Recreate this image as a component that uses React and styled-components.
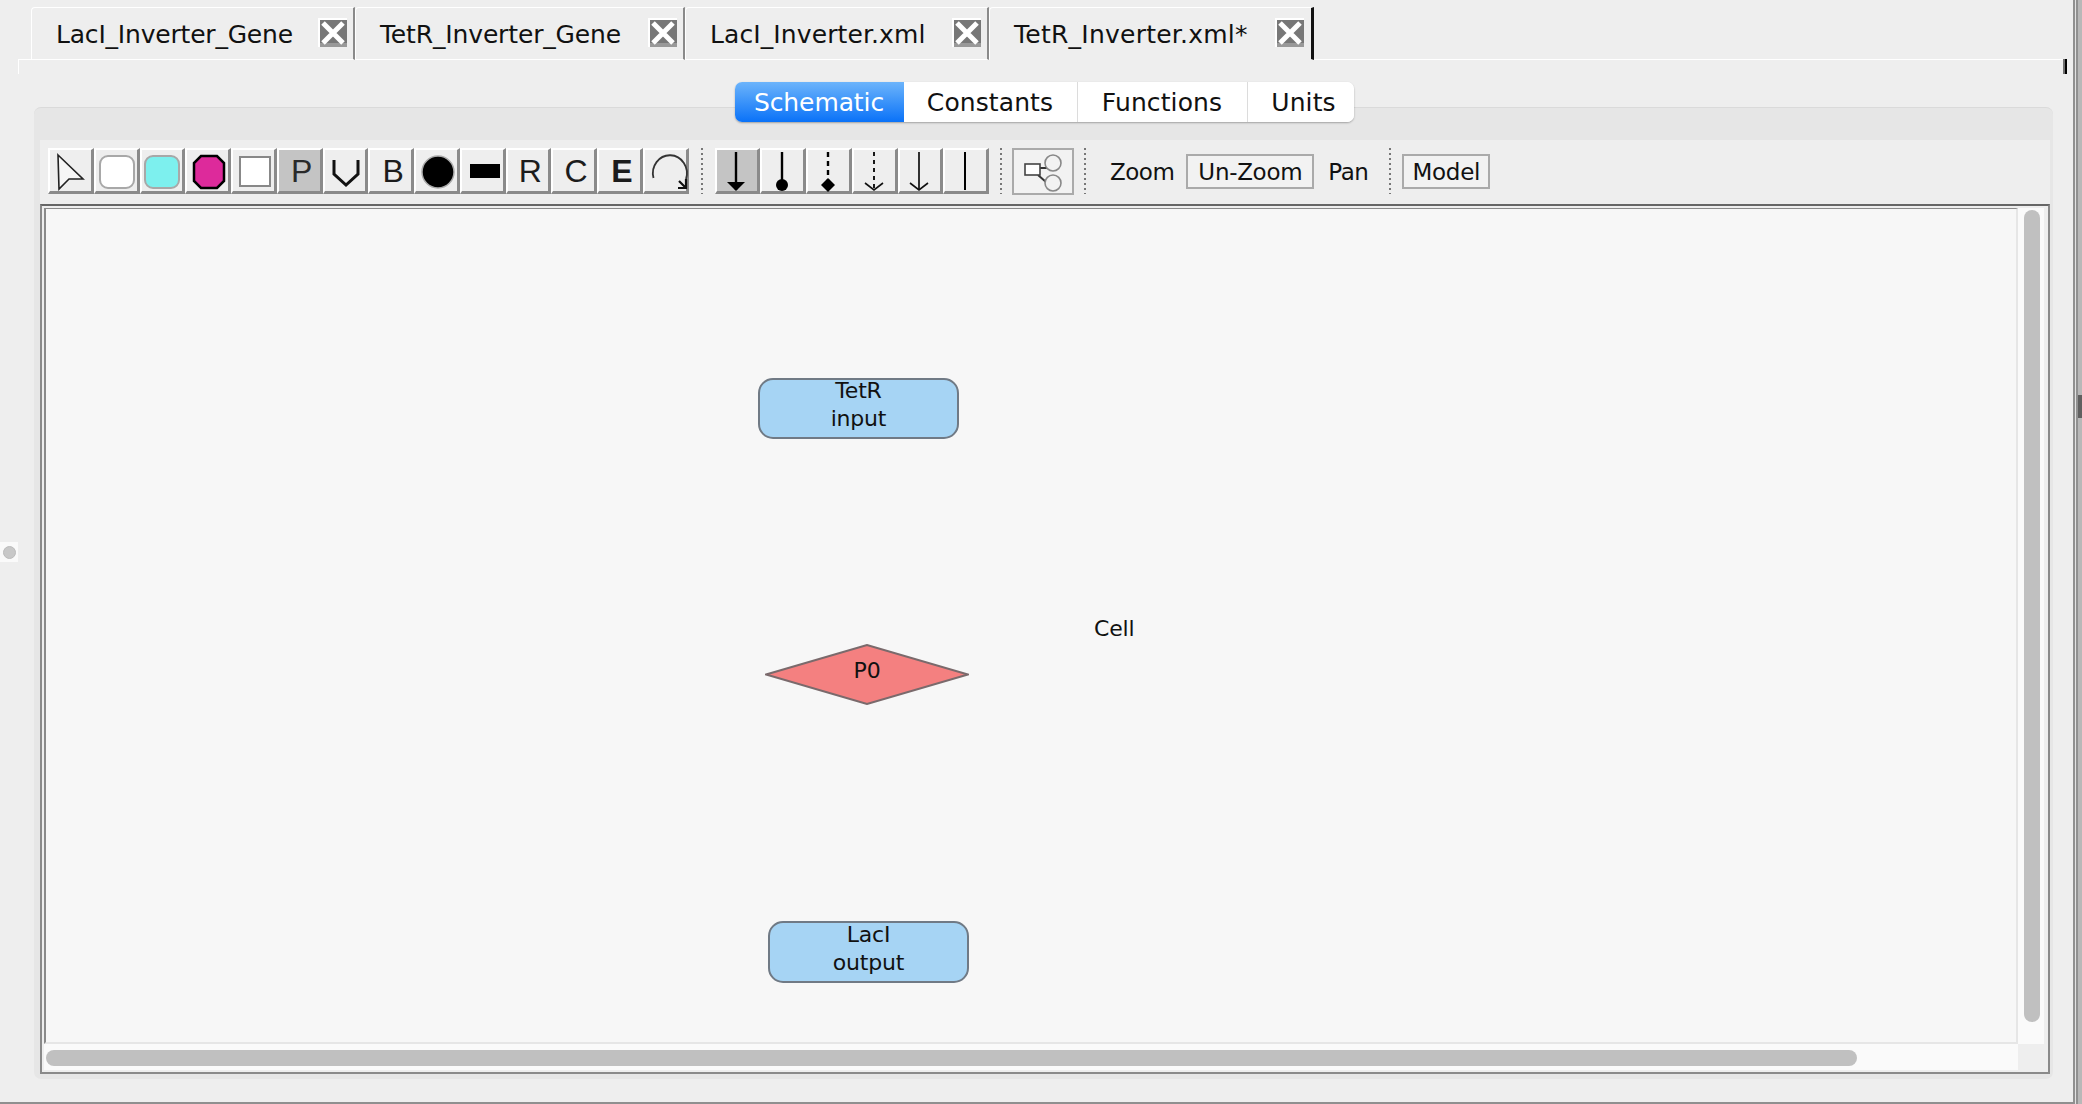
import React from "react";
import styled, { createGlobalStyle } from "styled-components";

const Global = createGlobalStyle`
  html, body { margin: 0; padding: 0; background: #eeeeee; }
  body { font-family: "DejaVu Sans", "Open Sans", sans-serif; color: #111; overflow: hidden; }
`;

const Window = styled.div`
  display: flex;
  width: 2082px;
  height: 1104px;
  overflow: hidden;
  background: #eeeeee;
`;
const Main = styled.div`
  display: flex;
  flex-direction: column;
  width: 2073px;
  height: 1104px;
  box-sizing: border-box;
  border-bottom: 2px solid #8f8f8f;
`;
const EdgeLine = styled.div`
  width: 2px;
  height: 1104px;
  background: #909090;
`;
const EdgeGap = styled.div`
  width: 1px;
  background: #e2e2e2;
`;
const EdgeStripe = styled.div`
  width: 2px;
  background: #909090;
`;
const EdgeRail = styled.div`
  position: relative;
  width: 4px;
  background: #b8b8b8;
`;
const EdgeGrip = styled.div`
  position: absolute;
  left: 0;
  top: 395px;
  width: 4px;
  height: 23px;
  background: #606060;
`;
const SideHandle = styled.div`
  position: absolute;
  left: 0;
  top: 542px;
  width: 18px;
  height: 20px;
  background: #fafafa;
  display: flex;
  align-items: center;
  justify-content: center;
`;
const HandleDot = styled.div`
  width: 11px;
  height: 11px;
  border-radius: 50%;
  background: #c8c8c8;
  border: 1px solid #bbb;
`;

const TabStrip = styled.div`
  display: flex;
  margin: 7px 0 0 18px;
  width: 2049px;
  height: 53px;
`;
const TabLead = styled.div`
  width: 13px;
  border-bottom: 1px solid #fff;
`;
const TabFill = styled.div`
  flex: 1;
  border-bottom: 1px solid #fff;
`;
const Tab = styled.div`
  position: relative;
  box-sizing: border-box;
  width: ${(p) => p.$w}px;
  height: 53px;
  display: flex;
  align-items: center;
  padding: 0 ${(p) => (p.$active ? 7 : 6)}px 0 24px;
  border-top: 1px solid #fff;
  border-left: 1px solid #fff;
  border-top-left-radius: 4px;
  border-right: ${(p) => (p.$active ? "3px solid #111" : "2px solid #8a8a8a")};
  border-bottom: 1px solid ${(p) => (p.$active ? "#eeeeee" : "#fff")};
  font-size: 25px;
  white-space: nowrap;
`;
const TabLabel = styled.span`
  flex: 1;
  margin-top: 1px;
  letter-spacing: ${(p) => p.$track}px;
`;
const CloseBox = styled.svg`
  flex: none;
  width: 29px;
  height: 29px;
  margin-top: -2px;
  display: block;
`;
const TabBody = styled.div`
  position: relative;
  margin-left: 18px;
  width: 2049px;
  height: 14px;
  box-sizing: border-box;
  border-left: 1px solid #fff;
`;
const CornerMark = styled.div`
  position: absolute;
  right: 0;
  top: -1px;
  width: 2px;
  height: 15px;
  background: #000;
  border-left: 2px solid #707070;
`;

const SegmentRow = styled.div`
  position: relative;
  z-index: 1;
  display: flex;
  justify-content: center;
  margin: 8px 0 0 35px;
  width: 2018px;
  height: 40px;
`;
const Segments = styled.div`
  display: flex;
  height: 40px;
  border-radius: 7px;
  overflow: hidden;
  background: #fff;
  box-shadow: 0 1px 2px rgba(0, 0, 0, 0.3);
`;
const Segment = styled.div`
  box-sizing: border-box;
  width: ${(p) => p.$w}px;
  padding: 1px 0 0 ${(p) => (p.$last ? 6 : 0)}px;
  display: flex;
  align-items: center;
  justify-content: center;
  font-size: 25px;
  letter-spacing: ${(p) => (p.$on ? -0.1 : 0.1)}px;
  color: ${(p) => (p.$on ? "#fff" : "#111")};
  background: ${(p) => (p.$on ? "linear-gradient(#6cb4fb, #0a72f8)" : "#fff")};
  border-right: ${(p) => (p.$last || p.$on ? "none" : "1px solid #dcdcdc")};
`;

const Panel = styled.div`
  box-sizing: border-box;
  margin: -15px 0 0 34px;
  width: 2019px;
  height: 972px;
  padding: 33px 3px 5px 6px;
  background: #e6e6e6;
  border-top: 1px solid #dadada;
  border-radius: 7px;
`;
const Toolbar = styled.div`
  display: flex;
  align-items: flex-start;
  box-sizing: border-box;
  height: 64px;
  margin-top: -1px;
  padding: 8px 0 0 8px;
  background: #eeeeee;
`;
const ToolGroup = styled.div`
  display: flex;
`;
const ToolButton = styled.div`
  box-sizing: border-box;
  width: 45.75px;
  height: 46px;
  display: flex;
  align-items: center;
  justify-content: center;
  padding-left: ${(p) => (p.$glyph ? 5 : 0)}px;
  border-top: 2px solid #fff;
  border-left: 2px solid #fff;
  border-right: 3px solid #8a8a8a;
  border-bottom: 3px solid #8a8a8a;
  background: ${(p) => (p.$on ? "#c4c4c4" : "#eeeeee")};
  overflow: visible;
  font-family: "Liberation Sans", sans-serif;
  font-weight: ${(p) => (p.$bold ? 700 : 400)};
  font-size: 32px;
  line-height: 1;
  color: ${(p) => (p.$on ? "#2a2a2a" : "#1c1c1c")};
`;
const ToolIcon = styled.svg`
  flex: none;
  width: 41px;
  height: 41px;
  display: block;
  overflow: visible;
`;
const Separator = styled.div`
  flex: none;
  width: 2px;
  height: 46px;
  margin: 0 ${(p) => p.$right}px 0 ${(p) => p.$left}px;
  background: repeating-linear-gradient(#777 0 2px, transparent 2px 5px);
`;
const LayoutButton = styled.div`
  box-sizing: border-box;
  width: 62px;
  height: 47px;
  border: 2px solid #aaaaaa;
  background: #f2f2f2;
`;
const LayoutIcon = styled.svg`
  display: block;
  width: 58px;
  height: 43px;
  overflow: visible;
`;
const ActionText = styled.div`
  height: 35px;
  margin: 6px 0 0 ${(p) => p.$left}px;
  display: flex;
  align-items: center;
  font-size: 23px;
  letter-spacing: -0.5px;
`;
const ActionButton = styled.div`
  box-sizing: border-box;
  width: ${(p) => p.$w}px;
  height: 35px;
  margin: 6px 0 0 ${(p) => p.$left}px;
  display: flex;
  align-items: center;
  justify-content: center;
  border: 2px solid #aaaaaa;
  background: #f2f2f2;
  font-size: 23px;
  letter-spacing: -0.3px;
`;

const Frame = styled.div`
  box-sizing: border-box;
  height: 870px;
  padding: 2px 4px 2px 2px;
  background: #eeeeee;
  border-top: 2px solid #666;
  border-left: 2px solid #8a8a8a;
  border-right: 2px solid #8a8a8a;
  border-bottom: 2px solid #8a8a8a;
  display: grid;
  grid-template-columns: 1fr 26px;
  grid-template-rows: 1fr 26px;
`;
const Viewport = styled.div`
  position: relative;
  background: #f7f7f7;
  border-top: 1px solid #8a8a8a;
  border-left: 2px solid #8a8a8a;
  border-right: 2px solid #e6e6e6;
  border-bottom: 2px solid #e6e6e6;
`;
const VTrack = styled.div`
  background: #fafafa;
  padding: 2px 0 0 6px;
`;
const VThumb = styled.div`
  width: 16px;
  height: 812px;
  border-radius: 8px;
  background: #c0c0c0;
`;
const HTrack = styled.div`
  background: #fafafa;
  padding: 6px 0 0 2px;
`;
const HThumb = styled.div`
  width: 1811px;
  height: 16px;
  border-radius: 8px;
  background: #c0c0c0;
`;
const Corner = styled.div`
  background: #eeeeee;
`;
const SpeciesNode = styled.div`
  position: absolute;
  left: ${(p) => p.$x}px;
  top: ${(p) => p.$y}px;
  box-sizing: border-box;
  width: 201px;
  height: ${(p) => p.$h}px;
  border: 2px solid #707a85;
  border-radius: 15px;
  background: #a6d4f4;
  font-size: 22px;
  line-height: 28px;
  letter-spacing: -0.2px;
  text-align: center;
`;
const NodeLines = styled.div`
  margin-top: ${(p) => p.$top}px;
`;
const PromoterNode = styled.div`
  position: absolute;
  left: ${(p) => p.$x}px;
  top: ${(p) => p.$y}px;
  width: 204px;
  height: 61px;
  display: flex;
  align-items: center;
  justify-content: center;
  font-size: 22px;
  letter-spacing: -0.2px;
`;
const PromoterShape = styled.svg`
  position: absolute;
  inset: 0;
  width: 204px;
  height: 61px;
`;
const PromoterLabel = styled.span`
  position: relative;
  margin-top: -8px;
`;
const CellLabel = styled.div`
  position: absolute;
  left: ${(p) => p.$x}px;
  top: ${(p) => p.$y}px;
  font-size: 22px;
  line-height: 28px;
  letter-spacing: -0.2px;
`;

const Close = () => (
  <CloseBox viewBox="0 0 29 29">
    <rect x="0" y="0" width="29" height="29" fill="#fff" />
    <rect x="2" y="2" width="27" height="27" fill="#777" />
    <rect x="2" y="25" width="27" height="4" fill="#999" />
    <path d="M5 5 L25 25 M25 5 L5 25" stroke="#fff" strokeWidth="5" />
  </CloseBox>
);

const tabs = [
  { t: "LacI_Inverter_Gene", w: 324, track: -0.2 },
  { t: "TetR_Inverter_Gene", w: 330, track: -0.15 },
  { t: "LacI_Inverter.xml", w: 304, track: 0.1 },
  { t: "TetR_Inverter.xml*", w: 325, track: 0.24, active: true },
];

const lineIcon = (dash, width, head) => (
  <ToolIcon viewBox="0 0 41 41">
    <line x1="20" y1="2" x2="20" y2="40" stroke="#000" strokeWidth={width} strokeDasharray={dash} />
    {head}
  </ToolIcon>
);

const openHead = <path d="M11 33 L20 40 L29 33" fill="none" stroke="#111" strokeWidth="1.6" />;

const Arrow = () => (
  <ToolIcon viewBox="0 0 41 41">
    <path d="M8 5 L33 29 L19 29 L9 39 Z" fill="#f6f6f6" stroke="#222" strokeWidth="1.6" />
  </ToolIcon>
);
const RoundBox = ({ fill }) => (
  <ToolIcon viewBox="0 0 41 41">
    <rect x="4" y="6" width="34" height="32" rx="8" fill={fill} stroke="#a8a8a8" strokeWidth="2" />
  </ToolIcon>
);

const App = () => (
  <Window>
    <Global />
    <SideHandle>
      <HandleDot />
    </SideHandle>
    <Main>
      <TabStrip>
        <TabLead />
        {tabs.map((tab) => (
          <Tab key={tab.t} $w={tab.w} $active={tab.active}>
            <TabLabel $track={tab.track}>{tab.t}</TabLabel>
            <Close />
          </Tab>
        ))}
        <TabFill />
      </TabStrip>
      <TabBody>
        <CornerMark />
      </TabBody>
      <SegmentRow>
        <Segments>
          <Segment $on $w={169}>Schematic</Segment>
          <Segment $w={174}>Constants</Segment>
          <Segment $w={170}>Functions</Segment>
          <Segment $last $w={106}>Units</Segment>
        </Segments>
      </SegmentRow>
      <Panel>
        <Toolbar>
          <ToolGroup>
            <ToolButton><Arrow /></ToolButton>
            <ToolButton><RoundBox fill="#ffffff" /></ToolButton>
            <ToolButton><RoundBox fill="#7df0ee" /></ToolButton>
            <ToolButton>
              <ToolIcon viewBox="0 0 41 41">
                <path d="M14 6 H30 L37 13 V31 L30 38 H14 L7 31 V13 Z" fill="#dd2a9b" stroke="#000" strokeWidth="2.5" />
              </ToolIcon>
            </ToolButton>
            <ToolButton>
              <ToolIcon viewBox="0 0 41 41">
                <rect x="7" y="7" width="30" height="29" fill="#fff" stroke="#888" strokeWidth="2" />
              </ToolIcon>
            </ToolButton>
            <ToolButton $on $glyph>P</ToolButton>
            <ToolButton>
              <ToolIcon viewBox="0 0 41 41">
                <path d="M10 10 V24 L22 35 L34 24 V10" fill="none" stroke="#111" strokeWidth="3" />
              </ToolIcon>
            </ToolButton>
            <ToolButton $glyph>B</ToolButton>
            <ToolButton>
              <ToolIcon viewBox="0 0 41 41">
                <circle cx="22" cy="22" r="16" fill="#000" stroke="#aaa" strokeWidth="1.5" />
              </ToolIcon>
            </ToolButton>
            <ToolButton>
              <ToolIcon viewBox="0 0 41 41">
                <rect x="8" y="14" width="30" height="14" fill="#000" />
              </ToolIcon>
            </ToolButton>
            <ToolButton $glyph>R</ToolButton>
            <ToolButton $glyph>C</ToolButton>
            <ToolButton $glyph $bold>E</ToolButton>
            <ToolButton>
              <ToolIcon viewBox="0 0 41 41">
                <path d="M8.5 28 A17 18 0 1 1 41 29" fill="none" stroke="#333" strokeWidth="1.8" />
                <path d="M41 29 V38 H33 M41 38 L34 31" fill="none" stroke="#111" strokeWidth="2.2" />
              </ToolIcon>
            </ToolButton>
          </ToolGroup>
          <Separator $left={12} $right={12} />
          <ToolGroup>
            <ToolButton $on>
              {lineIcon(undefined, 2.4, <path d="M11 32 H29 L20 41 Z" fill="#000" />)}
            </ToolButton>
            <ToolButton>
              {lineIcon(undefined, 2.4, <circle cx="20" cy="35" r="6" fill="#000" />)}
            </ToolButton>
            <ToolButton>
              {lineIcon("5 4", 2.4, <path d="M20 28 L27 35 L20 42 L13 35 Z" fill="#000" />)}
            </ToolButton>
            <ToolButton>{lineIcon("4 4", 1.8, openHead)}</ToolButton>
            <ToolButton>{lineIcon(undefined, 1.6, openHead)}</ToolButton>
            <ToolButton>{lineIcon(undefined, 2, null)}</ToolButton>
          </ToolGroup>
          <Separator $left={11} $right={10} />
          <LayoutButton>
            <LayoutIcon viewBox="0 0 58 43">
              <path d="M26 18 H34 M24 25 L32 32" stroke="#333" strokeWidth="2" />
              <circle cx="39" cy="13" r="8" fill="#f2f2f2" stroke="#888" strokeWidth="1.6" />
              <circle cx="39" cy="33" r="8" fill="#f2f2f2" stroke="#888" strokeWidth="1.6" />
              <rect x="11" y="14" width="15" height="11" fill="#fff" stroke="#444" strokeWidth="1.6" />
            </LayoutIcon>
          </LayoutButton>
          <Separator $left={10} $right={0} />
          <ActionText $left={24}>Zoom</ActionText>
          <ActionButton $left={12} $w={128}>Un-Zoom</ActionButton>
          <ActionText $left={14}>Pan</ActionText>
          <Separator $left={21} $right={0} />
          <ActionButton $left={11} $w={88}>Model</ActionButton>
        </Toolbar>
        <Frame>
          <Viewport>
            <SpeciesNode $x={712} $y={169} $h={61}>
              <NodeLines $top={-3}>TetR<br />input</NodeLines>
            </SpeciesNode>
            <PromoterNode $x={719} $y={435}>
              <PromoterShape viewBox="0 0 204 61">
                <path d="M1 30.5 L102 1 L203 30.5 L102 60 Z" fill="#f48080" stroke="#7a6a6c" strokeWidth="2" />
              </PromoterShape>
              <PromoterLabel>P0</PromoterLabel>
            </PromoterNode>
            <CellLabel $x={1048} $y={406}>Cell</CellLabel>
            <SpeciesNode $x={722} $y={712} $h={62}>
              <NodeLines $top={-2}>LacI<br />output</NodeLines>
            </SpeciesNode>
          </Viewport>
          <VTrack><VThumb /></VTrack>
          <HTrack><HThumb /></HTrack>
          <Corner />
        </Frame>
      </Panel>
    </Main>
    <EdgeLine />
    <EdgeGap />
    <EdgeStripe />
    <EdgeRail>
      <EdgeGrip />
    </EdgeRail>
  </Window>
);

export default App;
